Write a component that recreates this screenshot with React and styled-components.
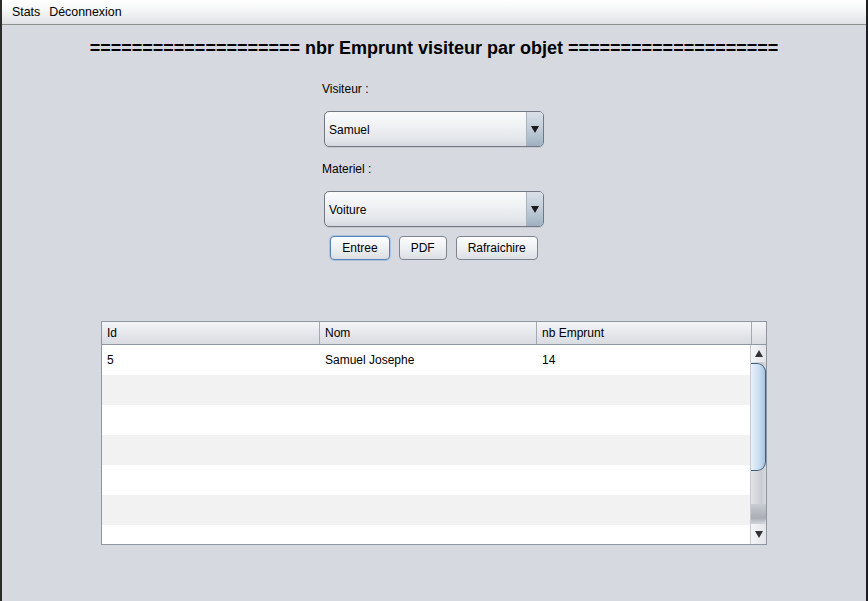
import React from 'react';
import styled, { createGlobalStyle, css } from 'styled-components';

const GlobalStyle = createGlobalStyle`
    html, body {
        margin: 0;
        padding: 0;
        background: #d6d9df;
    }
    #root {
        height: 601px;
    }
`;

const visiteurs = ['Samuel'];
const materiels = ['Voiture'];
const colonnes = ['Id', 'Nom', 'nb Emprunt'];
const lignes = [
    ['5', 'Samuel Josephe', '14'],
    ['', '', ''],
    ['', '', ''],
    ['', '', ''],
    ['', '', ''],
    ['', '', ''],
    ['', '', ''],
];

const App = () => {
    return (
        <>
            <GlobalStyle />
            <Frame>
                <Edge />
                <Window>
                    <MenuBar>
                        <MenuItem>Stats</MenuItem>
                        <MenuItem>Déconnexion</MenuItem>
                    </MenuBar>
                    <Content>
                        <Title>==================== nbr Emprunt visiteur par objet ====================</Title>
                        <Form>
                            <Label>Visiteur :</Label>
                            <Combo value={visiteurs[0]} />
                            <Label>Materiel :</Label>
                            <Combo value={materiels[0]} />
                            <Buttons>
                                <Button $focused>Entree</Button>
                                <Button>PDF</Button>
                                <Button>Rafraichire</Button>
                            </Buttons>
                        </Form>
                        <Table>
                            <Header>
                                {colonnes.map(c => <HeadCell key={c}>{c}</HeadCell>)}
                                <HeadCell $corner />
                            </Header>
                            <Body>
                                <Rows>
                                    {lignes.map((l, i) => (
                                        <Row key={i} $odd={i % 2 === 1}>
                                            {l.map((v, j) => <Cell key={j}>{v}</Cell>)}
                                        </Row>
                                    ))}
                                </Rows>
                                <ScrollBar>
                                    <ScrollButton>
                                        <svg width="8" height="7" viewBox="0 0 8 7"><path d="M4 0 L8 7 L0 7 Z" fill="#333" /></svg>
                                    </ScrollButton>
                                    <Track>
                                        <Thumb />
                                    </Track>
                                    <ScrollButton $down>
                                        <svg width="8" height="7" viewBox="0 0 8 7"><path d="M0 0 L8 0 L4 7 Z" fill="#333" /></svg>
                                    </ScrollButton>
                                </ScrollBar>
                            </Body>
                        </Table>
                    </Content>
                </Window>
                <Edge $right />
            </Frame>
        </>
    );
}

const Combo = ({ value }) => (
    <ComboBox>
        <ComboText>{value}</ComboText>
        <ComboArrow>
            <svg width="8" height="7" viewBox="0 0 8 7"><path d="M0 0 L8 0 L4 7 Z" fill="#1a1a1a" /></svg>
        </ComboArrow>
    </ComboBox>
);

const Frame = styled.div`
    display: flex;
    height: 601px;
    font-family: "Liberation Sans", Arial, sans-serif;
    font-size: 12px;
    color: #000;
`;

const Edge = styled.div`
    width: 2px;
    background: #2b2b2b;
    ${props => props.$right && css`
    background: #1e1e1e;
    `}
`;

const Window = styled.div`
    flex: 1;
    display: flex;
    flex-direction: column;
    background: #d6d9df;
`;

const MenuBar = styled.div`
    height: 24px;
    display: flex;
    align-items: center;
    gap: 9px;
    padding-left: 10px;
    background: linear-gradient(#ffffff 0%, #f6f7f8 40%, #dfe1e5 100%);
    border-bottom: 1px solid #8e8f91;
    font-size: 12.4px;
`;

const MenuItem = styled.span`
    line-height: 24px;
`;

const Content = styled.div`
    flex: 1;
    display: flex;
    flex-direction: column;
    align-items: center;
`;

const Title = styled.h1`
    margin: 12px 0 0 0;
    font-size: 18px;
    line-height: 22px;
    font-weight: bold;
    white-space: nowrap;
`;

const Form = styled.div`
    width: 222px;
    display: flex;
    flex-direction: column;
    margin-top: 22px;
    margin-left: -2px;
`;

const Label = styled.div`
    line-height: 16px;
    height: 16px;
`;

const ComboBox = styled.div`
    margin: 14px 0 14px 2px;
    height: 34px;
    display: flex;
    border: 1px solid #717884;
    border-radius: 5px;
    overflow: hidden;
    background: linear-gradient(#fbfbfc 0%, #eef0f3 45%, #e3e6ea 80%, #d5d9df 100%);
    box-shadow: 0 1px 0 #c4c8cf;
`;

const ComboText = styled.div`
    flex: 1;
    display: flex;
    align-items: center;
    padding: 2px 0 0 4px;
`;

const ComboArrow = styled.div`
    width: 16px;
    display: flex;
    align-items: center;
    justify-content: center;
    border-left: 1px solid #a9b3c0;
    background: linear-gradient(#d9e0e8 0%, #c3ceda 45%, #aebdcd 80%, #9fafc1 100%);
`;

const Buttons = styled.div`
    display: flex;
    justify-content: center;
    gap: 9px;
    margin-top: -5px;
    padding-left: 2px;
`;

const Button = styled.div`
    height: 22px;
    padding: 0 11px;
    display: flex;
    align-items: center;
    border: 1px solid #7d848e;
    border-radius: 4px;
    background: linear-gradient(#fdfdfd 0%, #eef0f2 50%, #dcdfe4 100%);
    ${props => props.$focused && css`
    border-color: #5a82b0;
    box-shadow: 0 0 0 1px #a8c4e2;
    `}
`;

const Table = styled.div`
    margin-top: 61px;
    width: 664px;
    height: 222px;
    border: 1px solid #8f96a1;
    display: flex;
    flex-direction: column;
    background: #fff;
`;

const Header = styled.div`
    display: grid;
    grid-template-columns: 218px 217px 215px 1fr;
    height: 22px;
    border-bottom: 1px solid #8f96a1;
    background: linear-gradient(#f4f5f7 0%, #e6e8ec 50%, #d8dbe0 100%);
`;

const HeadCell = styled.div`
    display: flex;
    align-items: center;
    padding-left: 5px;
    border-right: 1px solid #a4aab3;
    ${props => props.$corner && css`
    border-right: none;
    padding: 0;
    `}
`;

const Body = styled.div`
    flex: 1;
    display: flex;
    overflow: hidden;
`;

const Rows = styled.div`
    flex: 1;
    overflow: hidden;
`;

const Row = styled.div`
    display: grid;
    grid-template-columns: 218px 217px 1fr;
    height: 30px;
    background: ${props => props.$odd ? '#f2f2f2' : '#ffffff'};
`;

const Cell = styled.div`
    display: flex;
    align-items: center;
    padding-left: 5px;
`;

const ScrollBar = styled.div`
    width: 15px;
    display: flex;
    flex-direction: column;
    border-left: 1px solid #c7cbd1;
    background: linear-gradient(90deg, #e2e4e7, #c9ccd1 70%, #d8dade);
`;

const ScrollButton = styled.div`
    height: 17px;
    display: flex;
    align-items: center;
    justify-content: center;
    background: linear-gradient(90deg, #f4f5f7, #e3e5e9);
    ${props => props.$down && css`
    height: 20px;
    `}
`;

const Track = styled.div`
    flex: 1;
    padding-top: 1px;
    display: flex;
    flex-direction: column;
    justify-content: space-between;
    &::after {
        content: '';
        height: 20px;
        background: linear-gradient(#c9ccd1, #a9adb4 70%, #d3d6da);
        border-radius: 0 0 6px 0;
    }
`;

const Thumb = styled.div`
    height: 106px;
    border: 1px solid #41607f;
    border-left: none;
    border-radius: 0 9px 9px 0;
    background: linear-gradient(90deg, #e9f1fa, #c9dcf0 60%, #a9c4e0);
`;

export default App;
